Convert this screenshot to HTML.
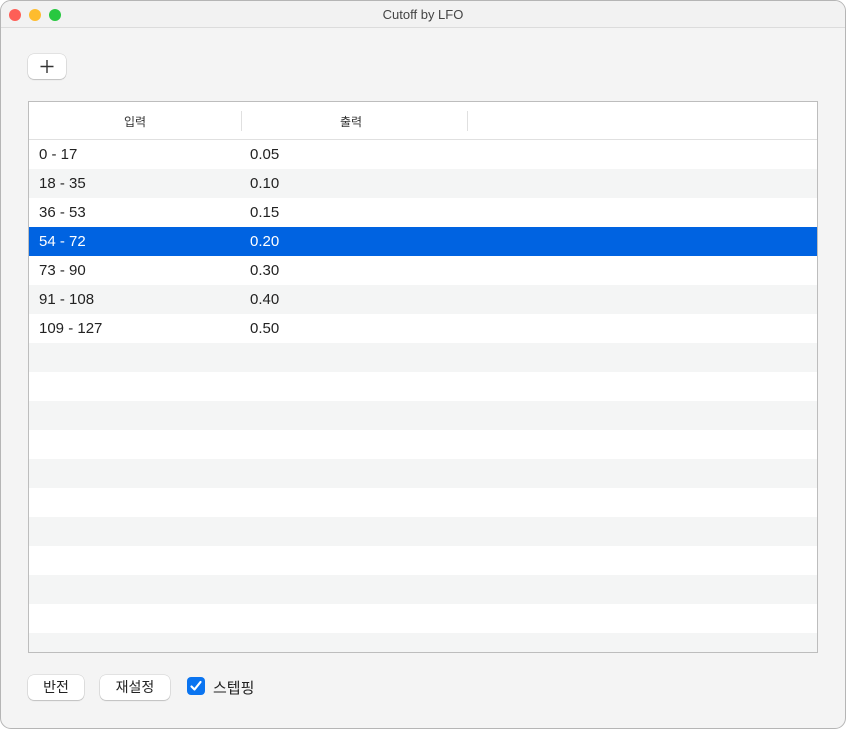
<!DOCTYPE html><html><head><meta charset="utf-8"><style>
*{margin:0;padding:0;box-sizing:border-box}
body{width:846px;height:729px;background:#fff;font-family:"Liberation Sans","Noto Sans CJK KR",sans-serif;overflow:hidden}
.win{position:absolute;left:0;top:0;width:846px;height:729px;border:1px solid #b5b5b5;border-radius:11px;background:#f4f4f4;overflow:hidden}
.tb{height:27px;border-bottom:1px solid #dcdcdc;background:#f2f2f2;text-align:center;font-size:13px;line-height:27px;color:#444}
.dot{position:absolute;top:8px;width:12px;height:12px;border-radius:50%}
.btn{position:absolute;background:#fff;border-radius:6px;box-shadow:0 0 0 .5px rgba(0,0,0,.15),0 1px 1px rgba(0,0,0,.15);font-size:14px;text-align:center;color:#222}
.tbl{position:absolute;left:27px;top:100px;width:790px;height:552px;border:1px solid #bdbdbd;background:#fff;overflow:hidden}
.hd{height:38px;border-bottom:1px solid #e0e0e0;position:relative;font-size:12px;color:#333}
.hd span{position:absolute;top:11px}
.sep{position:absolute;top:9px;width:1px;height:20px;background:#e0e0e0}
.row{height:29px;position:relative;font-size:15px;color:#222}
.row span{position:absolute;top:6px}
.alt{background:#f4f5f5}
.sel{background:#0063e1;color:#fff}
</style></head><body><div class="win">
<div class="tb">Cutoff by LFO</div>
<div class="dot" style="left:8px;background:#fe5f57"></div>
<div class="dot" style="left:28px;background:#febc2e"></div>
<div class="dot" style="left:48px;background:#28c840"></div>
<div class="btn" style="left:27px;top:53px;width:38px;height:25px;"><svg width="38" height="25" viewBox="0 0 38 25"><path d="M19 6v13M12.5 12.5h13" stroke="#333" stroke-width="1.4"/></svg></div>
<div class="tbl">
<div class="hd"><span style="left:95px">입력</span><div class="sep" style="left:212px"></div><span style="left:311px">출력</span><div class="sep" style="left:438px"></div></div>
<div class="row"><span style="left:10px">0 - 17</span><span style="left:221px">0.05</span></div>
<div class="row alt"><span style="left:10px">18 - 35</span><span style="left:221px">0.10</span></div>
<div class="row"><span style="left:10px">36 - 53</span><span style="left:221px">0.15</span></div>
<div class="row sel"><span style="left:10px">54 - 72</span><span style="left:221px">0.20</span></div>
<div class="row"><span style="left:10px">73 - 90</span><span style="left:221px">0.30</span></div>
<div class="row alt"><span style="left:10px">91 - 108</span><span style="left:221px">0.40</span></div>
<div class="row"><span style="left:10px">109 - 127</span><span style="left:221px">0.50</span></div>
<div class="row alt"></div><div class="row"></div><div class="row alt"></div><div class="row"></div><div class="row alt"></div><div class="row"></div><div class="row alt"></div><div class="row"></div><div class="row alt"></div><div class="row"></div><div class="row alt"></div>
</div>
<div class="btn" style="left:27px;top:674px;width:56px;height:25px;line-height:25px">반전</div>
<div class="btn" style="left:99px;top:674px;width:70px;height:25px;line-height:25px">재설정</div>
<div style="position:absolute;left:186px;top:676px;width:18px;height:18px;border-radius:4px;background:#0a74f0"><svg width="18" height="18" viewBox="0 0 18 18"><path d="M4.5 9.5l3 3 6-7.5" stroke="#fff" stroke-width="2.2" fill="none" stroke-linecap="round" stroke-linejoin="round"/></svg></div>
<div style="position:absolute;left:212px;top:676px;font-size:15px;color:#222">스텝핑</div>
</div></body></html>
